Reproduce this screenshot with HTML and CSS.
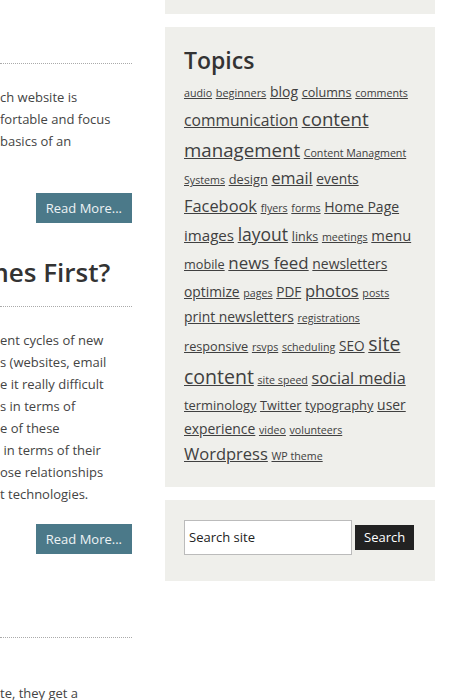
FILE: index.html
```html
<!DOCTYPE html>
<html lang="en">
<head>
<meta charset="utf-8">
<title>Blog</title>
<link rel="stylesheet" href="styles.css">
</head>
<body>
<div class="page">
  <main class="content">
    <article class="post">
      <header class="post-header"><h2 class="post-title">&nbsp;</h2></header>
      <div class="post-body">
        <p>ch website is<br>fortable and focus<br>basics of an<br>&nbsp;</p>
      </div>
      <div class="more"><a class="read-more" href="#">Read More...</a></div>
    </article>
    <article class="post">
      <header class="post-header"><h2 class="post-title"><span class="clip">mes First?</span></h2></header>
      <div class="post-body">
        <p>ent cycles of new<br>s (websites, email<br>e it really difficult<br>s in terms of<br>e of these<br>&nbsp;in terms of their<br>ose relationships<br>t technologies.</p>
      </div>
      <div class="more"><a class="read-more" href="#">Read More...</a></div>
    </article>
    <article class="post">
      <header class="post-header"><h2 class="post-title">&nbsp;</h2></header>
      <div class="post-body">
        <p>&nbsp;<br>te, they get a</p>
      </div>
    </article>
  </main>
  <aside class="sidebar">
    <section class="widget widget-stub"></section>
    <section class="widget">
      <h3 class="widget-title">Topics</h3>
      <div class="tagcloud">
        <a href="#" style="font-size:10.67px">audio</a>
        <a href="#" style="font-size:10.9px">beginners</a>
        <a href="#" style="font-size:14px">blog</a>
        <a href="#" style="font-size:12.6px">columns</a>
        <a href="#" style="font-size:10.67px">comments</a>
        <a href="#" style="font-size:15.7px">communication</a>
        <a href="#" style="font-size:18.7px">content management</a>
        <a href="#" style="font-size:10.67px">Content Managment Systems</a>
        <a href="#" style="font-size:12.8px">design</a>
        <a href="#" style="font-size:16.2px">email</a>
        <a href="#" style="font-size:13.8px">events</a>
        <a href="#" style="font-size:16.4px">Facebook</a>
        <a href="#" style="font-size:10.67px">flyers</a>
        <a href="#" style="font-size:10.67px">forms</a>
        <a href="#" style="font-size:14px">Home Page</a>
        <a href="#" style="font-size:15.1px">images</a>
        <a href="#" style="font-size:17.5px">layout</a>
        <a href="#" style="font-size:12.5px">links</a>
        <a href="#" style="font-size:10.67px">meetings</a>
        <a href="#" style="font-size:14.7px">menu</a>
        <a href="#" style="font-size:12.7px">mobile</a>
        <a href="#" style="font-size:16.9px">news feed</a>
        <a href="#" style="font-size:13.9px">newsletters</a>
        <a href="#" style="font-size:13.8px">optimize</a>
        <a href="#" style="font-size:10.67px">pages</a>
        <a href="#" style="font-size:13.6px">PDF</a>
        <a href="#" style="font-size:16.5px">photos</a>
        <a href="#" style="font-size:10.67px">posts</a>
        <a href="#" style="font-size:13.9px">print newsletters</a>
        <a href="#" style="font-size:10.67px">registrations</a>
        <a href="#" style="font-size:12.7px">responsive</a>
        <a href="#" style="font-size:10.67px">rsvps</a>
        <a href="#" style="font-size:10.67px">scheduling</a>
        <a href="#" style="font-size:13.6px">SEO</a>
        <a href="#" style="font-size:19.5px">site content</a>
        <a href="#" style="font-size:10.67px">site speed</a>
        <a href="#" style="font-size:16.3px">social media</a>
        <a href="#" style="font-size:12.9px">terminology</a>
        <a href="#" style="font-size:12.7px">Twitter</a>
        <a href="#" style="font-size:12.9px">typography</a>
        <a href="#" style="font-size:13.9px">user experience</a>
        <a href="#" style="font-size:10.67px">video</a>
        <a href="#" style="font-size:10.67px">volunteers</a>
        <a href="#" style="font-size:16.5px">Wordpress</a>
        <a href="#" style="font-size:10.67px">WP theme</a>
      </div>
    </section>
    <section class="widget search-widget">
      <form class="search-form" onsubmit="return false">
        <input class="search-field" type="search" placeholder="Search site">
        <button class="search-submit" type="submit">Search</button>
      </form>
    </section>
  </aside>
</div>
</body>
</html>
```
FILE: styles.css
```css
* { box-sizing: border-box; }

html, body {
  margin: 0;
  padding: 0;
  background: #fff;
}

body {
  font-family: "Open Sans", "Liberation Sans", sans-serif;
  color: #444;
  line-height: 1.7;
  overflow: hidden;
}

.page {
  display: flex;
  align-items: flex-start;
  gap: 33px;
  width: 435px;
}

/* Main column */
.content {
  flex: none;
  width: 132px;
  padding-top: 14px;
}

.post {
  margin-bottom: 34px;
}

.post-title {
  margin: 0;
  padding-bottom: 18px;
  border-bottom: 1px dotted #aaa;
  font-size: 26px;
  font-weight: 600;
  line-height: 1.2;
  color: #333;
  white-space: nowrap;
}

.post-title .clip {
  margin-left: -16px;
}

.post-body {
  margin-top: 22px;
  font-size: 13px;
  white-space: nowrap;
}

.post-body p {
  margin: 0;
}

.more {
  display: flex;
  justify-content: flex-end;
  margin-top: 18px;
}

.read-more {
  display: block;
  padding: 0 10px;
  background: #4b7989;
  color: #eef3f5;
  font-size: 13px;
  line-height: 30px;
  text-decoration: none;
}

/* Sidebar */
.sidebar {
  flex: none;
  width: 270px;
  display: flex;
  flex-direction: column;
  gap: 13px;
}

.widget {
  background: #efefeb;
  padding: 20px 19px 19px;
}

.widget-stub {
  height: 14px;
  padding: 0;
}

.widget-title {
  margin: 0 0 5px;
  font-size: 23px;
  font-weight: 600;
  line-height: 1.2;
  color: #333;
}

.tagcloud {
  font-size: 14px;
  line-height: 1.67;
}

.tagcloud a {
  color: #404040;
  text-decoration: underline;
}

.search-widget {
  padding: 20px 19px 26px;
}

.search-form {
  display: flex;
  align-items: center;
  gap: 3px;
}

.search-field {
  width: 168px;
  height: 35px;
  margin: 0;
  padding: 0 4px;
  border: 1px solid #bbb;
  border-radius: 0;
  background: #fff;
  color: #222;
  font-family: "Open Sans", "Liberation Sans", sans-serif;
  font-size: 13px;
  outline: none;
}

.search-field::placeholder {
  color: #222;
  opacity: 1;
}

.search-submit {
  height: 25px;
  margin: 0;
  padding: 0 9px;
  border: 0;
  border-radius: 0;
  background: #222;
  color: #fff;
  font-family: "Open Sans", "Liberation Sans", sans-serif;
  font-size: 13px;
  line-height: 25px;
}
```
